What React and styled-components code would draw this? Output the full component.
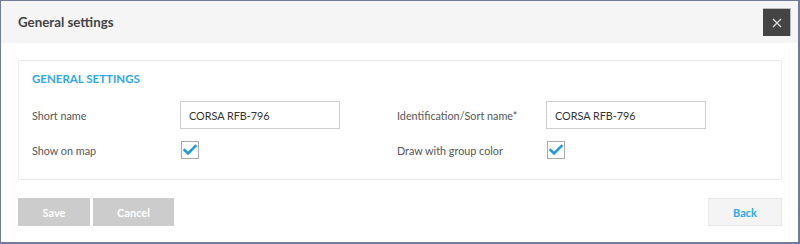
import React from "react";
import styled, { createGlobalStyle } from "styled-components";

const Global = createGlobalStyle`
  html, body { margin: 0; padding: 0; background: #fff; }
  body { font-family: Lato, "Open Sans", sans-serif; }
  * { box-sizing: border-box; }
`;

const Frame = styled.div`
  width: 800px;
  height: 244px;
  border-style: solid;
  border-color: #6f7d9a;
  border-width: 1px 2px 2px 1px;
  display: flex;
  flex-direction: column;
  background: #fff;
`;

const Header = styled.div`
  height: 42px;
  background: #f5f5f5;
  display: flex;
  align-items: center;
  justify-content: space-between;
  padding: 0 7px 0 17px;
`;

const Title = styled.h1`
  margin: 0;
  font-size: 13.3px;
  font-weight: 700;
  color: #444;
`;

const CloseButton = styled.button`
  width: 28px;
  height: 28px;
  border: none;
  border-top: 1px solid #bbb;
  border-right: 1px solid #bbb;
  background: #444;
  display: flex;
  align-items: center;
  justify-content: center;
  padding: 0;
  cursor: pointer;
`;

const Body = styled.div`
  flex: 1;
  padding: 17px 16px 16px 17px;
  display: flex;
  flex-direction: column;
`;

const Panel = styled.section`
  height: 120px;
  border: 1px solid #ececec;
  padding: 10px 13px 0 13px;
`;

const SectionTitle = styled.h2`
  margin: 0 0 14px 0;
  font-size: 11.5px;
  font-weight: 700;
  color: #2ea8ea;
  height: 16px;
  line-height: 16px;
`;

const Grid = styled.div`
  display: grid;
  grid-template-columns: 148px 160px 57px 149px 160px;
  row-gap: 12px;
  align-items: center;
`;

const Label = styled.label`
  font-size: 10.8px;
  color: #555;
  grid-column: ${(p) => p.col};
`;

const Input = styled.input`
  height: 28px;
  width: 160px;
  border: 1px solid #ccc;
  padding: 0 8px;
  font-family: Lato, "Open Sans", sans-serif;
  font-size: 10.8px;
  color: #333;
  outline: none;
  grid-column: ${(p) => p.col};
`;

const Check = styled.span`
  width: 18px;
  height: 18px;
  border: 1px solid #aaa;
  background: #fff;
  display: flex;
  align-items: center;
  justify-content: center;
  margin-left: 1px;
  grid-column: ${(p) => p.col};
`;

const Footer = styled.div`
  margin-top: 18px;
  display: flex;
  align-items: center;
  gap: 3px;
  padding-right: 0;
`;

const Button = styled.button`
  height: 28px;
  width: ${(p) => p.w}px;
  border: 1px solid ${(p) => (p.light ? "#e8e8e8" : "#cccccc")};
  background: ${(p) => (p.light ? "#f4f4f4" : "#cccccc")};
  color: ${(p) => (p.light ? "#2ea8ea" : "#fff")};
  font-family: Lato, "Open Sans", sans-serif;
  font-weight: 700;
  font-size: 11px;
  padding: 0;
  cursor: pointer;
`;

const Spacer = styled.div`
  flex: 1;
`;

const CheckIcon = () => (
  <svg width="14" height="12" viewBox="0 0 14 12">
    <path d="M1.5 6.2 L5 9.5 L12.5 2" fill="none" stroke="#1e9be0" strokeWidth="2.6" strokeLinecap="square" />
  </svg>
);

export default function App() {
  return (
    <>
      <Global />
      <Frame>
        <Header>
          <Title>General settings</Title>
          <CloseButton aria-label="Close">
            <svg width="10" height="10" viewBox="0 0 10 10">
              <path d="M1 1 L9 9 M9 1 L1 9" stroke="#ddd" strokeWidth="1.3" />
            </svg>
          </CloseButton>
        </Header>
        <Body>
          <Panel>
            <SectionTitle>GENERAL SETTINGS</SectionTitle>
            <Grid>
              <Label col={1}>Short name</Label>
              <Input col={2} defaultValue="CORSA RFB-796" />
              <Label col={4}>Identification/Sort name*</Label>
              <Input col={5} defaultValue="CORSA RFB-796" />
              <Label col={1}>Show on map</Label>
              <Check col={2}><CheckIcon /></Check>
              <Label col={4}>Draw with group color</Label>
              <Check col={5}><CheckIcon /></Check>
            </Grid>
          </Panel>
          <Footer>
            <Button w={72}>Save</Button>
            <Button w={81}>Cancel</Button>
            <Spacer />
            <Button w={74} light>Back</Button>
          </Footer>
        </Body>
      </Frame>
    </>
  );
}
